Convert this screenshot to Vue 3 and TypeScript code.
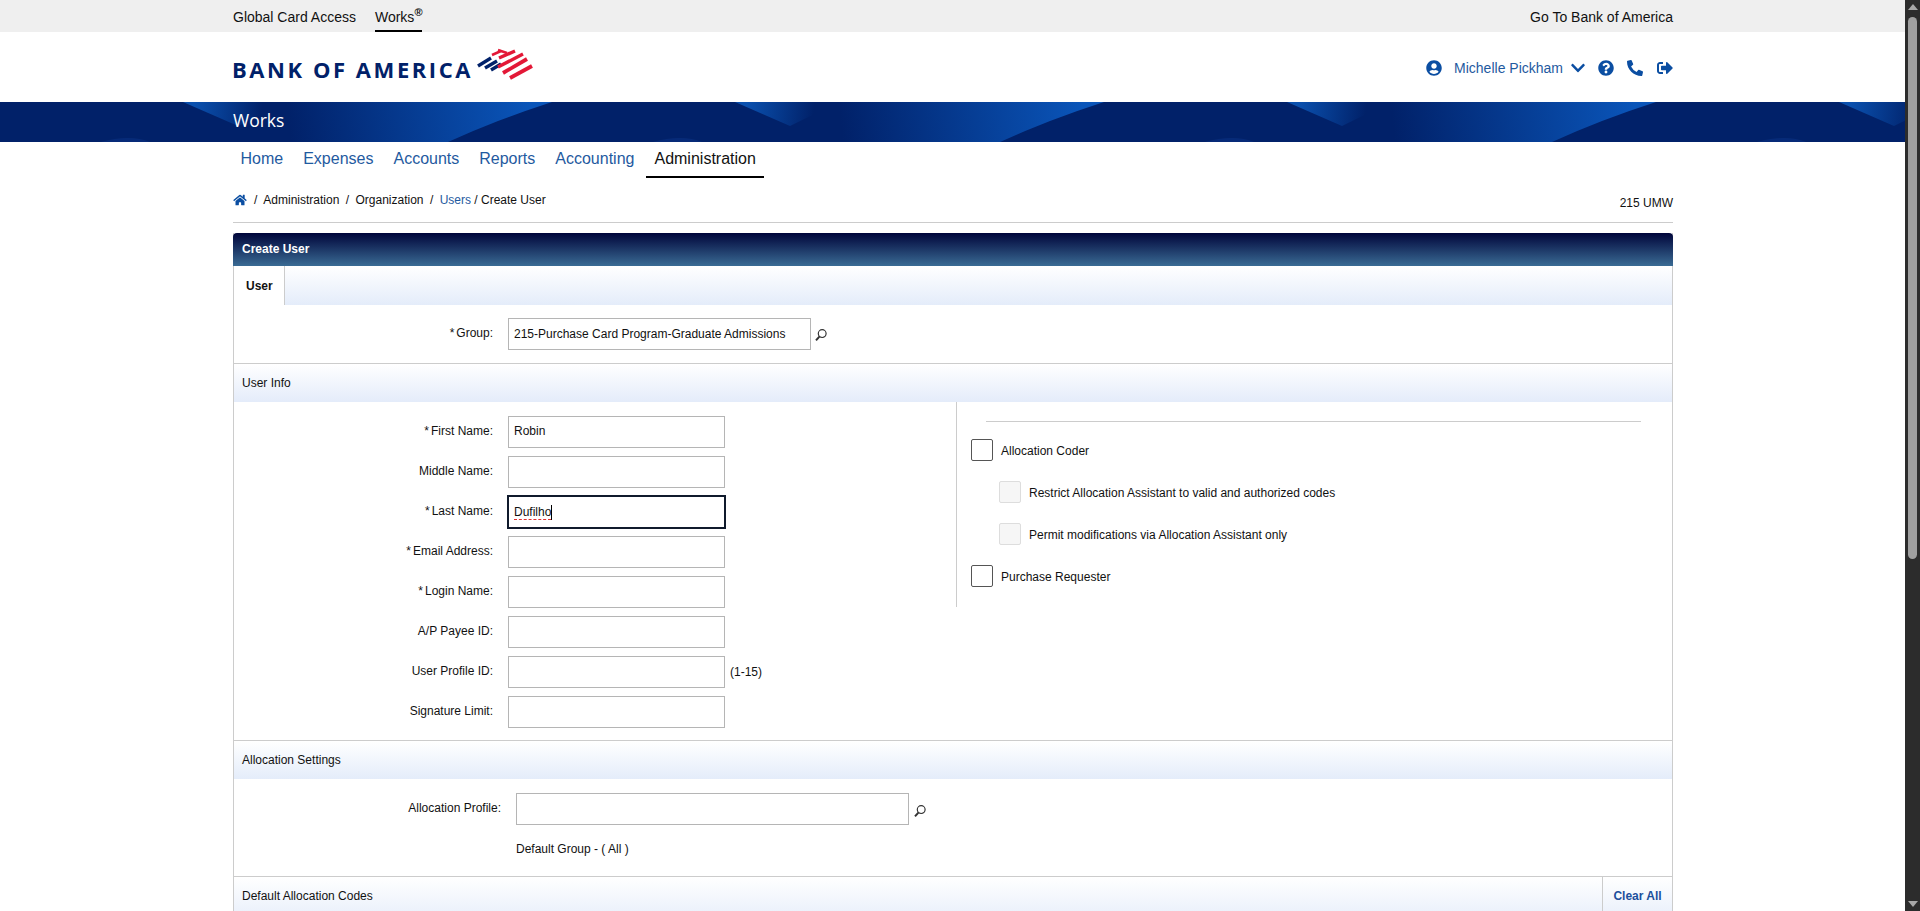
<template>
  <div class="page">
    <div class="main">
      <div class="top-bar">
        <div class="wrap top-inner">
          <div class="top-links">
            <span>Global Card Access</span>
            <span class="top-active">Works<sup>®</sup></span>
          </div>
          <span>Go To Bank of America</span>
        </div>
      </div>

      <header class="brand">
        <div class="wrap brand-inner">
          <div class="logo">
            <span class="logo-text">BANK OF AMERICA</span>
            <svg class="flag" viewBox="0 0 56 32" width="56" height="32">
              <g fill="none" stroke-width="3.4">
                <g stroke="#012169">
                  <path d="M1 18 14 10" />
                  <path d="M8 20 20 13" />
                  <path d="M14 22 24 16" />
                </g>
                <g stroke="#e31837">
                  <path d="M21 2 30 5" stroke-width="2.5" />
                  <path d="M15 7 24 3" stroke-width="2.5" />
                  <path d="M22 10 38 3" />
                  <path d="M21 19 46 6" />
                  <path d="M26 25 50 11" stroke-width="3.8" />
                  <path d="M33 30 55 18" stroke-width="3.8" />
                </g>
              </g>
            </svg>
          </div>
          <div class="user-tools">
            <svg class="ico user-ico" viewBox="0 0 496 512"><path d="M248 8C111 8 0 119 0 256s111 248 248 248 248-111 248-248S385 8 248 8zm0 96c48.6 0 88 39.4 88 88s-39.4 88-88 88-88-39.4-88-88 39.4-88 88-88zm0 344c-58.7 0-111.3-26.6-146.5-68.2 18.8-35.4 55.6-59.8 98.5-59.8 2.4 0 4.8.4 7.1 1.1 13 4.2 26.6 6.9 40.9 6.9 14.3 0 28-2.7 40.9-6.9 2.3-.7 4.7-1.1 7.1-1.1 42.9 0 79.7 24.4 98.5 59.8C359.3 421.4 306.7 448 248 448z" /></svg>
            <span class="user-name">Michelle Pickham</span>
            <svg class="ico chevron" viewBox="0 0 448 512"><path d="M207.029 381.476L12.686 187.132c-9.373-9.373-9.373-24.569 0-33.941l22.667-22.667c9.357-9.357 24.522-9.375 33.901-.04L224 284.505l154.745-154.021c9.379-9.335 24.544-9.317 33.901.04l22.667 22.667c9.373 9.373 9.373 24.569 0 33.941L240.971 381.476c-9.373 9.372-24.569 9.372-33.942 0z" /></svg>
            <svg class="ico help" viewBox="0 0 512 512"><path d="M504 256c0 136.997-111.043 248-248 248S8 392.997 8 256C8 119.083 119.043 8 256 8s248 111.083 248 248zM262.655 90c-54.497 0-89.255 22.957-116.549 63.758-3.536 5.286-2.353 12.415 2.715 16.258l34.699 26.31c5.205 3.947 12.621 3.008 16.665-2.122 17.864-22.658 30.113-35.797 57.303-35.797 20.429 0 45.698 13.148 45.698 32.958 0 14.976-12.363 22.667-32.534 33.976C247.128 238.528 216 254.941 216 296v4c0 6.627 5.373 12 12 12h56c6.627 0 12-5.373 12-12v-1.333c0-28.462 83.186-29.647 83.186-106.667 0-58.002-60.165-102-116.531-102zM256 338c-25.365 0-46 20.635-46 46 0 25.364 20.635 46 46 46s46-20.636 46-46c0-25.365-20.635-46-46-46z" /></svg>
            <svg class="ico phone" viewBox="0 0 512 512"><path d="M497.39 361.8l-112-48a24 24 0 0 0-28 6.9l-49.6 60.6A370.66 370.66 0 0 1 130.6 204.11l60.6-49.6a23.94 23.94 0 0 0 6.9-28l-48-112A24.16 24.16 0 0 0 122.6.61l-104 24A24 24 0 0 0 0 48c0 256.5 207.9 464 464 464a24 24 0 0 0 23.4-18.6l24-104a24.29 24.29 0 0 0-14.01-27.6z" /></svg>
            <svg class="ico signout" viewBox="0 0 512 512"><path d="M497 273L329 441c-15 15-41 4.5-41-17v-96H152c-13.3 0-24-10.7-24-24v-96c0-13.3 10.7-24 24-24h136V88c0-21.4 25.9-32 41-17l168 168c9.3 9.4 9.3 24.6 0 34zM192 436v-40c0-6.6-5.4-12-12-12H96c-17.7 0-32-14.3-32-32V160c0-17.7 14.3-32 32-32h84c6.6 0 12-5.4 12-12V76c0-6.6-5.4-12-12-12H96c-53 0-96 43-96 96v192c0 53 43 96 96 96h84c6.6 0 12-5.4 12-12z" /></svg>
          </div>
        </div>
      </header>

      <div class="banner">
        <svg class="banner-art" width="100%" height="40">
          <defs>
            <linearGradient id="swoosh" gradientUnits="userSpaceOnUse" x1="290" y1="30" x2="530" y2="0">
              <stop offset="0" stop-color="#012169" />
              <stop offset="1" stop-color="#0a55b9" />
            </linearGradient>
            <linearGradient id="notch" gradientUnits="userSpaceOnUse" x1="195" y1="0" x2="262" y2="8">
              <stop offset="0" stop-color="#0a50ae" />
              <stop offset="1" stop-color="#012169" />
            </linearGradient>
            <pattern id="tile" width="552" height="40" patternUnits="userSpaceOnUse">
              <rect width="552" height="40" fill="#012169" />
              <path d="M260 0H552Q496 18 448 40H260Z" fill="url(#swoosh)" />
              <path d="M183 0L238 24 287 0Z" fill="url(#notch)" />
              <path d="M101 40Q130 32 150 40Z" fill="#062a78" />
            </pattern>
          </defs>
          <rect width="100%" height="40" fill="url(#tile)" />
        </svg>
        <div class="wrap banner-title">Works</div>
      </div>

      <div class="wrap">
        <nav class="nav">
          <a v-for="item in navItems" :key="item" class="nav-item" :class="{ active: item === 'Administration' }">{{ item }}</a>
        </nav>

        <div class="crumbs">
          <div class="crumb-path">
            <svg class="home" viewBox="0 0 576 512"><path d="M280.37 148.26L96 300.11V464a16 16 0 0 0 16 16l112.06-.29a16 16 0 0 0 15.92-16V368a16 16 0 0 1 16-16h64a16 16 0 0 1 16 16v95.64a16 16 0 0 0 16 16.05L464 480a16 16 0 0 0 16-16V300L295.67 148.26a12.19 12.19 0 0 0-15.3 0zM571.6 251.47L488 182.56V44.05a12 12 0 0 0-12-12h-56a12 12 0 0 0-12 12v72.61L318.47 43a48 48 0 0 0-61 0L4.34 251.47a12 12 0 0 0-1.6 16.9l25.5 31A12 12 0 0 0 45.15 301l235.22-193.74a12.19 12.19 0 0 1 15.3 0L530.9 301a12 12 0 0 0 16.9-1.6l25.5-31a12 12 0 0 0-1.7-16.93z" /></svg>
            <span class="sep first">/</span>
            <span>Administration</span>
            <span class="sep">/</span>
            <span>Organization</span>
            <span class="sep">/</span>
            <span class="crumb-tail"><a class="crumb-link">Users</a> / Create User</span>
          </div>
          <span class="org">215 UMW</span>
        </div>

        <section class="card">
          <div class="card-title">Create User</div>
          <div class="tabs">
            <div class="tab">User</div>
          </div>

          <div class="group-row">
            <label class="label"><span class="req">*</span>Group:</label>
            <input class="field group-field" value="215-Purchase Card Program-Graduate Admissions" readonly />
            <svg class="lens" viewBox="0 0 14 14"><circle cx="8.2" cy="5.6" r="3.9" /><path d="M5.4 8.6 2 12.4" class="lens-handle" /></svg>
          </div>

          <div class="section-head">User Info</div>
          <div class="user-info">
            <div class="info-left">
              <div v-for="row in userFields" :key="row.label" class="form-row">
                <label class="label"><span v-if="row.required" class="req">*</span>{{ row.label }}</label>
                <div v-if="row.focused" class="field field-focus"><span class="misspelled">{{ row.value }}</span><span class="caret"></span></div>
                <input v-else class="field" :value="row.value" readonly />
                <span v-if="row.hint" class="hint">{{ row.hint }}</span>
              </div>
            </div>
            <div class="roles">
              <hr class="roles-rule" />
              <div v-for="role in roles" :key="role.label" class="role" :class="{ nested: role.nested }">
                <span class="check"></span>
                <span class="role-text">{{ role.label }}</span>
              </div>
            </div>
          </div>

          <div class="section-head">Allocation Settings</div>
          <div class="alloc">
            <div class="alloc-row">
              <label class="label alloc-label">Allocation Profile:</label>
              <input class="field alloc-field" readonly />
              <svg class="lens" viewBox="0 0 14 14"><circle cx="8.2" cy="5.6" r="3.9" /><path d="M5.4 8.6 2 12.4" class="lens-handle" /></svg>
            </div>
            <div class="alloc-note">Default Group - ( All )</div>
          </div>

          <div class="section-head codes-head">
            <span>Default Allocation Codes</span>
            <a class="clear-all">Clear All</a>
          </div>
        </section>
      </div>
    </div>

    <div class="scrollbar">
      <span class="arrow arrow-up"></span>
      <span class="thumb"></span>
      <span class="arrow arrow-down"></span>
    </div>
  </div>
</template>

<script setup lang="ts">
interface UserField {
  label: string;
  value: string;
  required?: boolean;
  focused?: boolean;
  hint?: string;
}

interface Role {
  label: string;
  nested?: boolean;
}

const navItems: string[] = ['Home', 'Expenses', 'Accounts', 'Reports', 'Accounting', 'Administration'];

const userFields: UserField[] = [
  { label: 'First Name:', value: 'Robin', required: true },
  { label: 'Middle Name:', value: '' },
  { label: 'Last Name:', value: 'Dufilho', required: true, focused: true },
  { label: 'Email Address:', value: '', required: true },
  { label: 'Login Name:', value: '', required: true },
  { label: 'A/P Payee ID:', value: '' },
  { label: 'User Profile ID:', value: '', hint: '(1-15)' },
  { label: 'Signature Limit:', value: '' },
];

const roles: Role[] = [
  { label: 'Allocation Coder' },
  { label: 'Restrict Allocation Assistant to valid and authorized codes', nested: true },
  { label: 'Permit modifications via Allocation Assistant only', nested: true },
  { label: 'Purchase Requester' },
];
</script>

<style>
html,
body {
  margin: 0;
  overflow: hidden;
}
</style>

<style scoped>
.page {
  display: flex;
  height: 911px;
  overflow: hidden;
  background: #fff;
  color: #111;
  font-family: "Liberation Sans", Arial, sans-serif;
  font-size: 12px;
}
.main {
  width: 1905px;
  flex-shrink: 0;
  overflow: hidden;
}
.wrap {
  width: 1440px;
  margin-left: 233px;
}

.top-bar {
  height: 32px;
  background: #efefef;
  font-size: 14px;
}
.top-inner {
  display: flex;
  justify-content: space-between;
  height: 32px;
  line-height: 34px;
}
.top-links {
  display: flex;
  gap: 19px;
}
.top-active {
  height: 30px;
  border-bottom: 2px solid #000;
}
.top-active sup {
  font-size: 11px;
  font-weight: 700;
  line-height: 0;
}

.brand {
  height: 70px;
}
.brand-inner {
  display: flex;
  justify-content: space-between;
  align-items: center;
  height: 70px;
}
.logo {
  display: flex;
  align-items: flex-start;
  gap: 4px;
  margin-left: -1px;
}
.logo-text {
  margin-top: 4px;
  font-family: "Open Sans", sans-serif;
  font-size: 22px;
  font-weight: 700;
  letter-spacing: 2.55px;
  line-height: 30px;
  color: #012169;
  white-space: nowrap;
}
.flag {
  margin-top: -2px;
}
.user-tools {
  display: flex;
  align-items: center;
  padding-top: 2px;
  color: #0b4ea2;
}
.ico {
  display: block;
  width: 16px;
  height: 16px;
  fill: #0b4ea2;
}
.user-ico {
  margin-right: 12px;
}
.user-name {
  font-size: 14px;
  color: #1f5aa0;
}
.chevron {
  margin-left: 8px;
  width: 14px;
}
.help {
  margin-left: 13px;
}
.phone {
  margin-left: 13px;
}
.signout {
  margin-left: 14px;
}

.banner {
  position: relative;
  height: 40px;
  background: #012169;
}
.banner-art {
  position: absolute;
  left: 0;
  top: 0;
  display: block;
}
.banner-title {
  position: relative;
  font-family: "Open Sans", sans-serif;
  font-size: 17.5px;
  line-height: 36px;
  color: #fff;
}

.nav {
  display: flex;
  gap: 4px;
  height: 36px;
  margin-left: -0.5px;
  font-size: 16px;
}
.nav-item {
  padding: 0 8px;
  line-height: 33px;
  color: #1f5aa0;
}
.nav-item.active {
  color: #111;
  border-bottom: 2px solid #000;
  height: 34px;
}

.crumbs {
  display: flex;
  justify-content: space-between;
  height: 44px;
  border-bottom: 1px solid #ccc;
}
.crumb-path {
  display: flex;
  align-items: center;
  height: 44px;
}
.sep {
  margin: 0 6.4px;
}
.sep.first {
  margin: 0 6px 0 7px;
}
.home {
  width: 14px;
  height: 12px;
  fill: #0b4ea2;
}
.crumb-link {
  color: #1f5aa0;
}
.org {
  margin-top: 17px;
  line-height: 16px;
}

.card {
  margin-top: 10px;
  border: 1px solid #ccc;
  border-top: 0;
}
.card-title {
  height: 33px;
  margin: 0 -1px;
  padding-left: 9px;
  line-height: 33px;
  border-radius: 4px 4px 0 0;
  background: linear-gradient(#00053a, #3a6b94);
  color: #fff;
  font-weight: 700;
}
.tabs {
  height: 39px;
  background: linear-gradient(#fff, #e4ecfa);
}
.tab {
  width: 51px;
  height: 39px;
  padding: 1px 0 0 12px;
  box-sizing: border-box;
  line-height: 39px;
  background: #fff;
  border-right: 1px solid #ccc;
  font-weight: 700;
}

.label {
  flex-shrink: 0;
  width: 274px;
  padding-right: 15px;
  box-sizing: border-box;
  margin-bottom: 2px;
  text-align: right;
  white-space: nowrap;
}
.req {
  margin-right: 2px;
}
.field {
  display: block;
  box-sizing: border-box;
  width: 217px;
  height: 32px;
  margin: 0;
  padding: 0 5px;
  border: 1px solid #b5b5b5;
  background: #fff;
  outline: none;
  color: #111;
  font-family: inherit;
  font-size: 12px;
}
.form-row .field {
  padding-bottom: 2px;
}
.group-row {
  display: flex;
  align-items: center;
  height: 58px;
  padding-bottom: 1px;
  box-sizing: border-box;
}
.group-field {
  width: 303px;
}
.lens {
  width: 14px;
  height: 14px;
  margin: 3px 0 0 4px;
  fill: none;
  stroke: #333;
  stroke-width: 1.2;
}
.group-row .lens {
  margin-left: 3px;
}
.lens-handle {
  stroke-width: 2;
}

.section-head {
  height: 39px;
  padding-left: 8px;
  box-sizing: border-box;
  line-height: 38px;
  border-top: 1px solid #ccc;
  background: linear-gradient(#fff, #e4ecfa);
}
.user-info {
  display: grid;
  grid-template-columns: 722px 1fr;
}
.info-left {
  display: flex;
  flex-direction: column;
  gap: 8px;
  padding: 14px 0 12px;
}
.form-row {
  display: flex;
  align-items: center;
  height: 32px;
}
.form-row .field-focus {
  display: flex;
  align-items: center;
  flex-shrink: 0;
  margin: -1px;
  width: 219px;
  height: 34px;
  padding: 0 0 0 5px;
  border: 2px solid #101a2c;
}
.misspelled {
  text-decoration: underline dashed #e03030 1px;
  text-decoration-skip-ink: none;
  text-underline-offset: 3px;
}
.caret {
  width: 1px;
  height: 15px;
  background: #000;
}
.hint {
  margin-left: 5px;
}
.roles {
  height: 205px;
  padding: 19px 0 0 14px;
  box-sizing: border-box;
  border-left: 1px solid #ccc;
}
.roles-rule {
  width: 655px;
  margin: 0 0 17px 15px;
  border: 0;
  border-top: 1px solid #ccc;
}
.role {
  display: flex;
  align-items: center;
  gap: 8px;
  height: 22px;
  margin-bottom: 20px;
}
.role.nested {
  margin-left: 28px;
}
.role-text {
  padding-top: 2px;
}
.check {
  width: 22px;
  height: 22px;
  box-sizing: border-box;
  border: 1px solid #555;
  border-radius: 2px;
  background: #fff;
}
.role.nested .check {
  border-color: #ddd;
  background: #f6f6f6;
}

.alloc {
  height: 97px;
  padding-top: 14px;
  box-sizing: border-box;
}
.alloc-row {
  display: flex;
  align-items: center;
}
.alloc-label {
  width: 282px;
  padding-right: 15px;
}
.alloc-field {
  width: 393px;
}
.alloc-note {
  margin: 16px 0 0 282px;
  line-height: 16px;
}
.codes-head {
  display: flex;
  justify-content: space-between;
  height: 50px;
}
.clear-all {
  width: 69px;
  text-align: center;
  border-left: 1px solid #ccc;
  color: #1c4f9c;
  font-weight: 700;
}

.scrollbar {
  position: relative;
  flex: 1;
  background: #2c2c2c;
}
.arrow {
  position: absolute;
  left: 3px;
  width: 0;
  height: 0;
  border-left: 5px solid transparent;
  border-right: 5px solid transparent;
}
.arrow-up {
  top: 4px;
  border-bottom: 6px solid #a8a8a8;
}
.arrow-down {
  bottom: 4px;
  border-top: 6px solid #a8a8a8;
}
.thumb {
  position: absolute;
  top: 17px;
  left: 3px;
  width: 9px;
  height: 542px;
  border-radius: 5px;
  background: #9f9f9f;
}
</style>
